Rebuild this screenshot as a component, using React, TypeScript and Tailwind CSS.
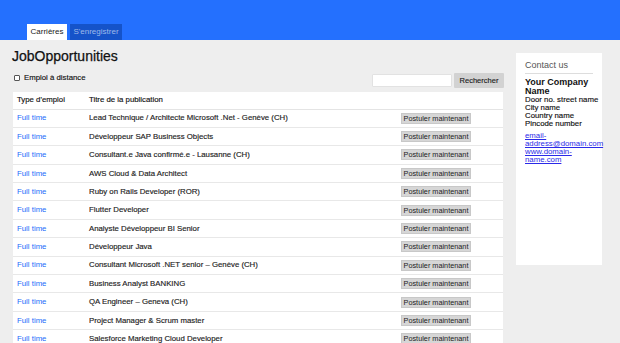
import React from 'react';

const jobs = [
  'Lead Technique / Architecte Microsoft .Net - Genève (CH)',
  'Développeur SAP Business Objects',
  'Consultant.e Java confirmé.e - Lausanne (CH)',
  'AWS Cloud & Data Architect',
  'Ruby on Rails Developer (ROR)',
  'Flutter Developer',
  'Analyste Développeur BI Senior',
  'Développeur Java',
  'Consultant Microsoft .NET senior – Genève (CH)',
  'Business Analyst BANKING',
  'QA Engineer – Geneva (CH)',
  'Project Manager & Scrum master',
  'Salesforce Marketing Cloud Developer',
];

function App() {
  return (
    <div className="h-[343px] w-[620px] overflow-hidden bg-[#eeeeee] font-['Liberation_Sans',Arial,sans-serif] text-[#111]">
      {/* Header */}
      <header className="flex h-[40px] items-end bg-[#2470fe] pl-[27px]">
        <div className="flex gap-[3px]">
          <div className="flex h-[16px] w-[40px] items-center justify-center bg-white text-[8px] text-[#222]">Carrières</div>
          <div className="flex h-[16px] w-[52px] items-center justify-center bg-[#1553c9] text-[8px] text-[#9fb9ea]">S'enregistrer</div>
        </div>
      </header>

      <div className="flex gap-[12px] pl-[12px]">
        {/* Main */}
        <main className="w-[492px]">
          <h1 className="mt-[7px] text-[14px] leading-[18px] [-webkit-text-stroke:0.25px_#111]">JobOpportunities</h1>
          <div className="mt-[5px] flex h-[16px] items-center justify-between pl-[2px]">
            <label className="flex items-center gap-[4px] text-[7.8px] [-webkit-text-stroke:0.15px_#111]">
              <input type="checkbox" className="h-[6px] w-[6px] appearance-none rounded-[1px] border border-[#555] bg-white" />
              Emploi à distance
            </label>
            <div className="mt-[5px] flex items-center gap-[2px]">
              <input className="h-[13px] w-[80px] rounded-[1px] border border-[#e2e2e2] bg-white" />
              <button className="h-[15px] w-[50px] rounded-[1px] bg-[#d2d2d2] text-[7.5px] text-[#222] [-webkit-text-stroke:0.15px_#222]">Rechercher</button>
            </div>
          </div>
          <div className="ml-[1px] mt-[6px] w-[490px] bg-white text-[7.8px]">
            <div className="flex h-[17.5px] items-center border-b border-[#e4e4e4] [-webkit-text-stroke:0.15px_#111]">
              <div className="w-[76px] pl-[4px]">Type d'emploi</div>
              <div>Titre de la publication</div>
            </div>
            {jobs.map((j) => (
              <div key={j} className="flex h-[18.4px] items-center border-b border-[#e8e8e8]">
                <div className="w-[76px] pl-[4px] text-[#1b6cfa]">Full time</div>
                <div className="w-[312px] text-[#222] [-webkit-text-stroke:0.15px_#222]">{j}</div>
                <button className="h-[11px] w-[70px] whitespace-nowrap border border-[#c8c8c8] bg-[#d6d6d6] text-[7.3px] leading-[9px] text-[#222]">Postuler maintenant</button>
              </div>
            ))}
          </div>
        </main>

        {/* Sidebar */}
        <aside className="mt-[13px] h-[212px] w-[86px] bg-white px-[9px] pt-[7px] text-[7.8px] leading-[8px]">
          <div className="border-b border-[#dddddd] pb-[3px] text-[9px] leading-[10px] text-[#555]">Contact us</div>
          <div className="mt-[4px] text-[9px] font-bold leading-[9px]">Your Company Name</div>
          <div className="whitespace-nowrap [-webkit-text-stroke:0.15px_#111]">Door no. street name</div>
          <div className="[-webkit-text-stroke:0.15px_#111]">City name</div>
          <div className="[-webkit-text-stroke:0.15px_#111]">Country name</div>
          <div className="[-webkit-text-stroke:0.15px_#111]">Pincode number</div>
          <div className="mt-[4px] whitespace-nowrap text-[#2a2ae8] underline">
            <div>email-<br />address@domain.com</div>
            <div>www.domain-<br />name.com</div>
          </div>
        </aside>
      </div>
    </div>
  );
}

export default App;
